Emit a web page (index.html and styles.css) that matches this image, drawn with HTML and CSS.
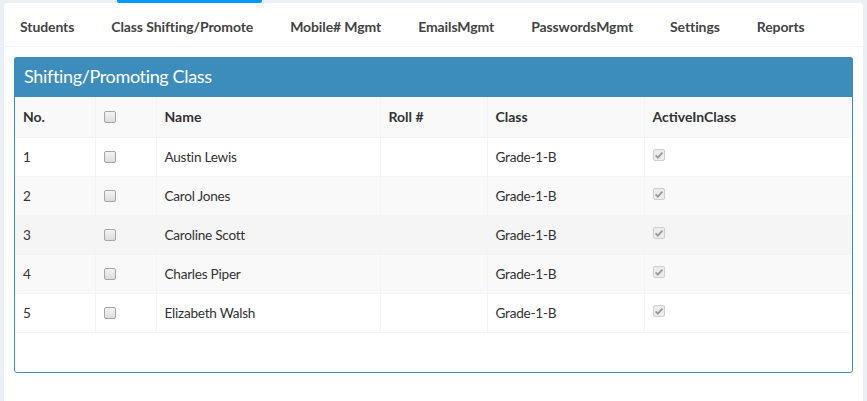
FILE: index.html
```html
<!DOCTYPE html>
<html>
<head>
<meta charset="utf-8">
<link rel="stylesheet" href="styles.css">
</head>
<body>
<div class="topstrip"><div class="activebar"></div></div>
<div class="wrap">
  <ul class="tabs">
    <li>Students</li>
    <li>Class Shifting/Promote</li>
    <li>Mobile# Mgmt</li>
    <li>EmailsMgmt</li>
    <li>PasswordsMgmt</li>
    <li>Settings</li>
    <li>Reports</li>
  </ul>
  <div class="content">
    <div class="panel">
      <div class="panel-head">Shifting/Promoting Class</div>
      <div class="panel-body">
        <table class="grid">
          <colgroup>
            <col class="c1"><col class="c2"><col class="c3"><col class="c4"><col class="c5"><col class="c6">
          </colgroup>
          <thead>
            <tr><th>No.</th><th><span class="cb"></span></th><th>Name</th><th>Roll #</th><th>Class</th><th>ActiveInClass</th></tr>
          </thead>
          <tbody>
            <tr><td>1</td><td><span class="cb"></span></td><td>Austin Lewis</td><td></td><td>Grade-1-B</td><td><span class="cbd"><svg viewBox="0 0 12 12" width="12" height="12"><path d="M2.6 6.4 L4.8 8.6 L9.4 3.6" fill="none" stroke="#9a9a9a" stroke-width="1.8"/></svg></span></td></tr>
            <tr class="alt"><td>2</td><td><span class="cb"></span></td><td>Carol Jones</td><td></td><td>Grade-1-B</td><td><span class="cbd"><svg viewBox="0 0 12 12" width="12" height="12"><path d="M2.6 6.4 L4.8 8.6 L9.4 3.6" fill="none" stroke="#9a9a9a" stroke-width="1.8"/></svg></span></td></tr>
            <tr class="hover"><td>3</td><td><span class="cb"></span></td><td>Caroline Scott</td><td></td><td>Grade-1-B</td><td><span class="cbd"><svg viewBox="0 0 12 12" width="12" height="12"><path d="M2.6 6.4 L4.8 8.6 L9.4 3.6" fill="none" stroke="#9a9a9a" stroke-width="1.8"/></svg></span></td></tr>
            <tr class="alt"><td>4</td><td><span class="cb"></span></td><td>Charles Piper</td><td></td><td>Grade-1-B</td><td><span class="cbd"><svg viewBox="0 0 12 12" width="12" height="12"><path d="M2.6 6.4 L4.8 8.6 L9.4 3.6" fill="none" stroke="#9a9a9a" stroke-width="1.8"/></svg></span></td></tr>
            <tr><td>5</td><td><span class="cb"></span></td><td>Elizabeth Walsh</td><td></td><td>Grade-1-B</td><td><span class="cbd"><svg viewBox="0 0 12 12" width="12" height="12"><path d="M2.6 6.4 L4.8 8.6 L9.4 3.6" fill="none" stroke="#9a9a9a" stroke-width="1.8"/></svg></span></td></tr>
          </tbody>
        </table>
      </div>
    </div>
  </div>
</div>
</body>
</html>
```
FILE: styles.css
```css
html, body {
  margin: 0;
  padding: 0;
  background: #ecf0f5;
  font-family: Lato, "Liberation Sans", sans-serif;
  color: #333;
  font-size: 14px;
}
.topstrip {
  height: 3px;
  display: flex;
}
.activebar {
  width: 145px;
  margin-left: 117px;
  height: 3px;
  background: #0099ff;
  border-radius: 0 0 2px 2px;
}
.wrap {
  margin: 0 4px 0 4px;
  width: 859px;
  background: #fff;
  border-radius: 3px 3px 0 0;
  height: 398px;
}
.tabs {
  list-style: none;
  margin: 0;
  padding: 0 0 0 16px;
  height: 43px;
  border-bottom: 1px solid #f4f4f4;
  display: flex;
  align-items: center;
}
.tabs li {
  font-weight: bold;
  color: #444;
  font-size: 14px;
  letter-spacing: -0.1px;
  margin-right: 37px;
  padding-top: 4px;
}
.content {
  padding: 10px 10px 0 10px;
}
.panel {
  border: 1px solid #3c8dbc;
  border-radius: 3px;
}
.panel-head {
  background: #3c8dbc;
  color: #fff;
  font-size: 18px;
  letter-spacing: -0.35px;
  height: 40px;
  line-height: 39px;
  padding-left: 10px;
  margin: -1px -1px 0 -1px;
  padding-right: 0;
  border-radius: 3px 3px 0 0;
}
.panel-body {
  padding-bottom: 39px;
}
.grid {
  width: 837px;
  border-collapse: collapse;
  table-layout: fixed;
}
.c1 { width: 80px; }
.c2 { width: 61px; }
.c3 { width: 224px; }
.c4 { width: 107px; }
.c5 { width: 157px; }
.c6 { width: 208px; }
.grid th, .grid td {
  text-align: left;
  padding: 0 8px;
  border: 1px solid #f4f4f4;
  border-top: 0;
  vertical-align: middle;
}
.grid td {
  font-size: 13.6px;
  letter-spacing: -0.25px;
}
.grid th:first-child, .grid td:first-child { border-left: 0; }
.grid th:last-child, .grid td:last-child { border-right: 0; }
.grid thead tr {
  background: #f9f9f9;
  height: 40px;
}
.grid th {
  font-weight: bold;
  color: #333;
}
.grid tbody tr { height: 39px; }
.grid tbody tr.alt { background: #f9f9f9; }
.grid tbody tr.hover { background: #f5f5f5; }
.cb {
  display: block;
  width: 10px;
  height: 10px;
  border: 1px solid #a6a6a6;
  border-radius: 2px;
  background: linear-gradient(#f4f4f4, #dcdcdc);
  margin-top: 0;
}
.cbd {
  display: block;
  width: 10px;
  height: 10px;
  border: 1px solid #cfcfcf;
  border-radius: 2px;
  background: #ececec;
  overflow: hidden;
  margin-top: -3px;
}
.cbd svg {
  display: block;
  margin: -1px;
}
```
